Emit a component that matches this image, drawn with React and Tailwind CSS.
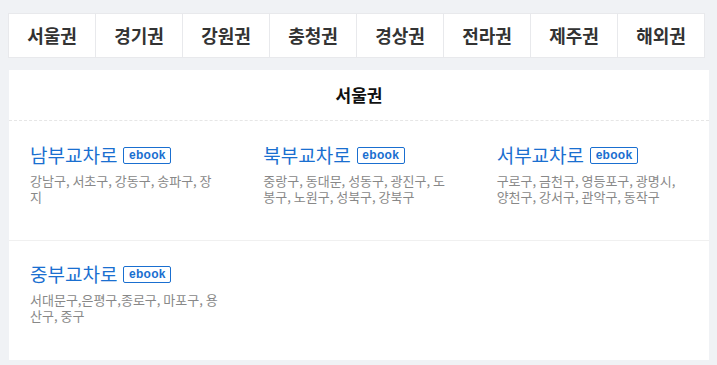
import React from "react";

const tabs = ["서울권", "경기권", "강원권", "충청권", "경상권", "전라권", "제주권", "해외권"];

const rows = [
  [
    { name: "남부교차로", areas: "강남구, 서초구, 강동구, 송파구, 장지" },
    { name: "북부교차로", areas: "중랑구, 동대문, 성동구, 광진구, 도봉구, 노원구, 성북구, 강북구" },
    { name: "서부교차로", areas: "구로구, 금천구, 영등포구, 광명시, 양천구, 강서구, 관악구, 동작구" },
  ],
  [{ name: "중부교차로", areas: "서대문구,은평구,종로구, 마포구, 용산구, 중구" }],
];

const font = { fontFamily: '"Noto Sans CJK KR", "Noto Sans", sans-serif' };

function Item({ item }) {
  return (
    <div className="pl-[21px]">
      <div className="flex items-center h-[20px]">
        <span className="text-[19px] leading-[20px] text-[#1a6fd0]">{item.name}</span>
        <span
          className="ml-[6px] h-[17px] w-[48px] flex items-center justify-center border border-[#1a6fd0] rounded-[2px] text-[12px] font-bold text-[#1a6fd0] tracking-[0.3px]"
          style={{ fontFamily: '"Liberation Sans", Arial, sans-serif' }}
        >
          ebook
        </span>
      </div>
      <p className="mt-[8px] w-[190px] text-[13px] leading-[16px] text-[#888] break-all">{item.areas}</p>
    </div>
  );
}

export default function App() {
  return (
    <div className="min-h-[365px] w-[717px] bg-[#f0f2f5] pt-[13px] pl-[8px]" style={font}>
      <div className="w-[697px] h-[45px] flex bg-white border border-[#e8e9ec]">
        {tabs.map((t, i) => (
          <div
            key={t}
            className={`flex-1 flex items-center justify-center text-[18px] font-bold text-[#333] ${i > 0 ? "border-l border-[#e8e9ec]" : ""}`}
          >
            {t}
          </div>
        ))}
      </div>
      <div className="mt-[12px] ml-[1px] w-[700px] h-[290px] bg-white">
        <div className="h-[51px] flex items-center justify-center border-b border-dashed border-[#e6e6e6] text-[17px] font-bold text-[#111]">
          서울권
        </div>
        <div className="h-[120px] grid grid-cols-3 pt-[24px] border-b border-[#f0f0f0]">
          {rows[0].map((it) => (
            <Item key={it.name} item={it} />
          ))}
        </div>
        <div className="grid grid-cols-3 pt-[23px]">
          {rows[1].map((it) => (
            <Item key={it.name} item={it} />
          ))}
        </div>
      </div>
    </div>
  );
}
